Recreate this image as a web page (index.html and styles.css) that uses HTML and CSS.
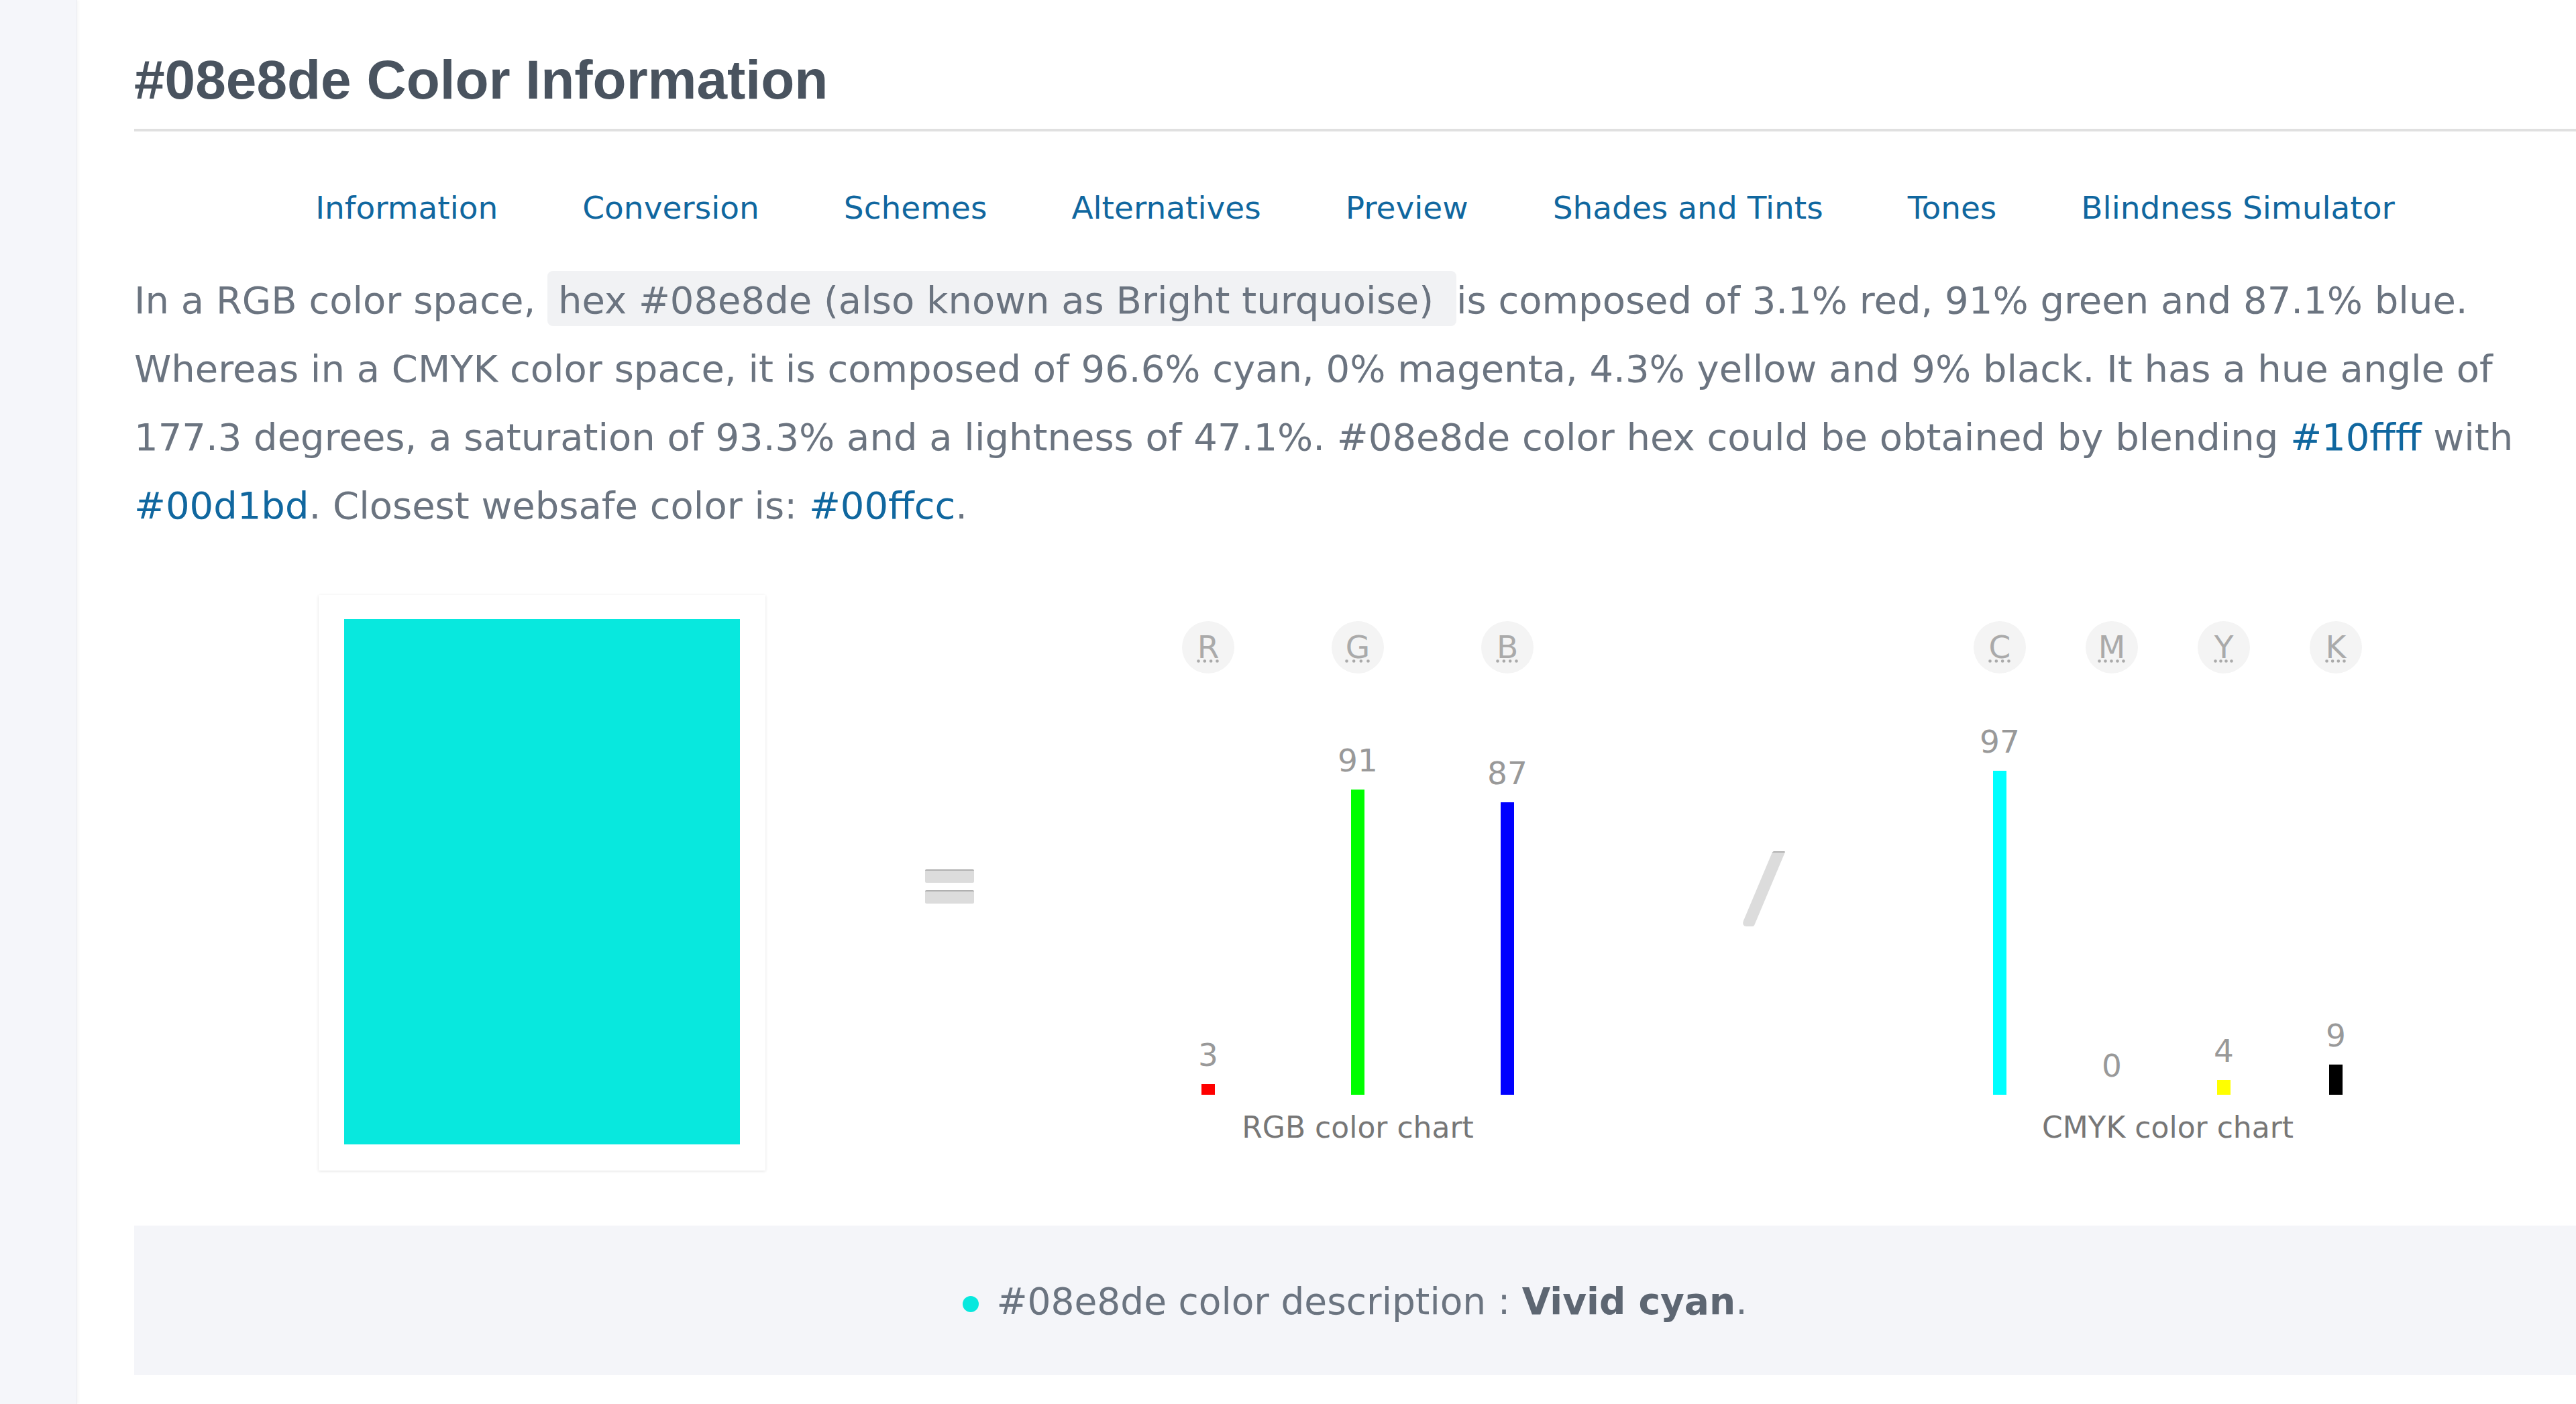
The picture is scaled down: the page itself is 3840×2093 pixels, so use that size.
FILE: index.html
```html
<!DOCTYPE html>
<html lang="en">
<head>
    <meta charset="UTF-8">
    <meta name="viewport" content="width=device-width, initial-scale=1.0">
    <title>#08e8de Color Information</title>
    <link rel="stylesheet" href="styles.css">
</head>
<body>
<div class="layout">
    <aside class="sidebar"></aside>

    <main class="content">
        <h1 class="title">#08e8de Color Information</h1>

        <nav class="tabs">
            <a href="#information">Information</a>
            <a href="#conversion">Conversion</a>
            <a href="#schemes">Schemes</a>
            <a href="#alternatives">Alternatives</a>
            <a href="#preview">Preview</a>
            <a href="#shades-and-tints">Shades and Tints</a>
            <a href="#tones">Tones</a>
            <a href="#blindness-simulator">Blindness Simulator</a>
        </nav>

        <p class="summary">In a RGB color space, <span class="hex-name">hex #08e8de (also known as Bright turquoise) </span>is composed of 3.1% red, 91% green and 87.1% blue. Whereas in a CMYK color space, it is composed of 96.6% cyan, 0% magenta, 4.3% yellow and 9% black. It has a hue angle of 177.3 degrees, a saturation of 93.3% and a lightness of 47.1%. #08e8de color hex could be obtained by blending <a href="#10ffff">#10ffff</a> with <a href="#00d1bd">#00d1bd</a>. Closest websafe color is: <a href="#00ffcc">#00ffcc</a>.</p>

        <div class="charts">
            <div class="swatch-card">
                <div class="swatch"></div>
            </div>

            <div class="equals"><span></span><span></span></div>

            <div class="chart rgb-chart">
                <abbr class="chart-head" title="Red">R</abbr>
                <abbr class="chart-head" title="Green">G</abbr>
                <abbr class="chart-head" title="Blue">B</abbr>

                <div class="chart-col"><span class="chart-value">3</span><span class="bar red" style="height: 15.5px"></span></div>
                <div class="chart-col"><span class="chart-value">91</span><span class="bar green" style="height: 455px"></span></div>
                <div class="chart-col"><span class="chart-value">87</span><span class="bar blue" style="height: 435.5px"></span></div>

                <p class="chart-caption">RGB color chart</p>
            </div>

            <div class="slash"></div>

            <div class="chart cmyk-chart">
                <abbr class="chart-head" title="Cyan">C</abbr>
                <abbr class="chart-head" title="Magenta">M</abbr>
                <abbr class="chart-head" title="Yellow">Y</abbr>
                <abbr class="chart-head" title="Key (black)">K</abbr>

                <div class="chart-col"><span class="chart-value">97</span><span class="bar cyan" style="height: 483px"></span></div>
                <div class="chart-col"><span class="chart-value">0</span><span class="bar magenta" style="height: 0px"></span></div>
                <div class="chart-col"><span class="chart-value">4</span><span class="bar yellow" style="height: 21.5px"></span></div>
                <div class="chart-col"><span class="chart-value">9</span><span class="bar black" style="height: 45px"></span></div>

                <p class="chart-caption">CMYK color chart</p>
            </div>
        </div>

        <div class="description">
            <span class="dot"></span>#08e8de color description : <strong>Vivid cyan</strong>.
        </div>
    </main>
</div>
</body>
</html>
```

FILE: styles.css
```css
body {
    margin: 0;
    background-color: white;
    color: #6b7480;
    font-family: "DejaVu Sans", Verdana, sans-serif;
}

a {
    color: #10679f;
    text-decoration: none;
}

.layout {
    display: flex;
    min-height: 100vh;
}

.sidebar {
    width: 114px;
    flex-shrink: 0;
    background-color: #f5f6fa;
    border-right: 1px solid #ebecf0;
    box-shadow: 2px 0 4px rgba(0, 0, 0, 0.04);
}

.content {
    flex: 1;
    padding-left: 85px;
}

.title {
    margin: 0;
    padding: 72px 0 26px;
    border-bottom: 4px solid #e0e0e0;
    font-family: "Liberation Sans", Arial, sans-serif;
    font-size: 82px;
    line-height: 94px;
    font-weight: bold;
    color: #49535f;
}

.tabs {
    display: flex;
    justify-content: center;
    gap: 126px;
    margin-top: 84px;
    font-size: 47px;
    line-height: 60px;
}

.summary {
    margin: 57px 0 0;
    font-size: 56px;
    line-height: 102px;
}

.hex-name {
    padding: 11px 16px 6px 16px;
    border-radius: 8px;
    background-color: #f1f2f4;
}

/* swatch = rgb / cmyk */
.charts {
    display: flex;
    justify-content: center;
    align-items: center;
    gap: 238px;
    margin-top: 82px;
}

.swatch-card {
    padding: 36px 38px 39px;
    background-color: white;
    box-shadow: 0 1px 4px rgba(0, 0, 0, 0.12);
}

.swatch {
    width: 590px;
    height: 783px;
    background-color: #08e8de;
}

.equals {
    display: flex;
    flex-direction: column;
    gap: 11px;
    margin-top: 10px;
}

.equals span {
    width: 73px;
    height: 18px;
    border-top: 2px solid #b0b0b0;
    border-radius: 2px;
    background-color: #dcdcdc;
}

.slash {
    width: 19px;
    height: 110px;
    margin: 18px 22px 0;
    border-top: 2px solid #b0b0b0;
    border-radius: 2px 2px 2px 8px;
    background-color: #dcdcdc;
    transform: skewX(-22.8deg);
}

.chart {
    display: grid;
    grid-template-rows: 78px 600px auto;
    row-gap: 28px;
    text-align: center;
}

.rgb-chart {
    grid-template-columns: repeat(3, 223px);
}

.cmyk-chart {
    grid-template-columns: repeat(4, 167px);
}

.chart-head {
    justify-self: center;
    width: 78px;
    height: 78px;
    border-radius: 50%;
    background-color: #f4f4f4;
    color: #aaa;
    font-size: 47px;
    line-height: 78px;
    text-decoration: underline dotted;
    cursor: help;
}

.chart-col {
    display: flex;
    flex-direction: column;
    align-items: center;
    justify-content: flex-end;
}

.chart-value {
    margin-bottom: 20px;
    color: #999;
    font-size: 47px;
    line-height: 47px;
}

.bar {
    width: 20px;
}

.red { background-color: #ff0000; }
.green { background-color: #00ff00; }
.blue { background-color: #0000ff; }
.cyan { background-color: #00ffff; }
.magenta { background-color: #ff00ff; }
.yellow { background-color: #ffff00; }
.black { background-color: #000000; }

.chart-caption {
    grid-column: 1 / -1;
    margin: -6px 0 0;
    color: #777;
    font-size: 44px;
    line-height: 53px;
}

.description {
    margin-top: 82px;
    padding: 62px 0 59px;
    background-color: #f4f5f9;
    text-align: center;
    font-size: 55px;
    line-height: 102px;
}

.description strong {
    color: #5d6672;
}

.dot {
    display: inline-block;
    width: 24px;
    height: 24px;
    margin-right: 26px;
    border-radius: 50%;
    background-color: #08e8de;
    vertical-align: middle;
}
```
